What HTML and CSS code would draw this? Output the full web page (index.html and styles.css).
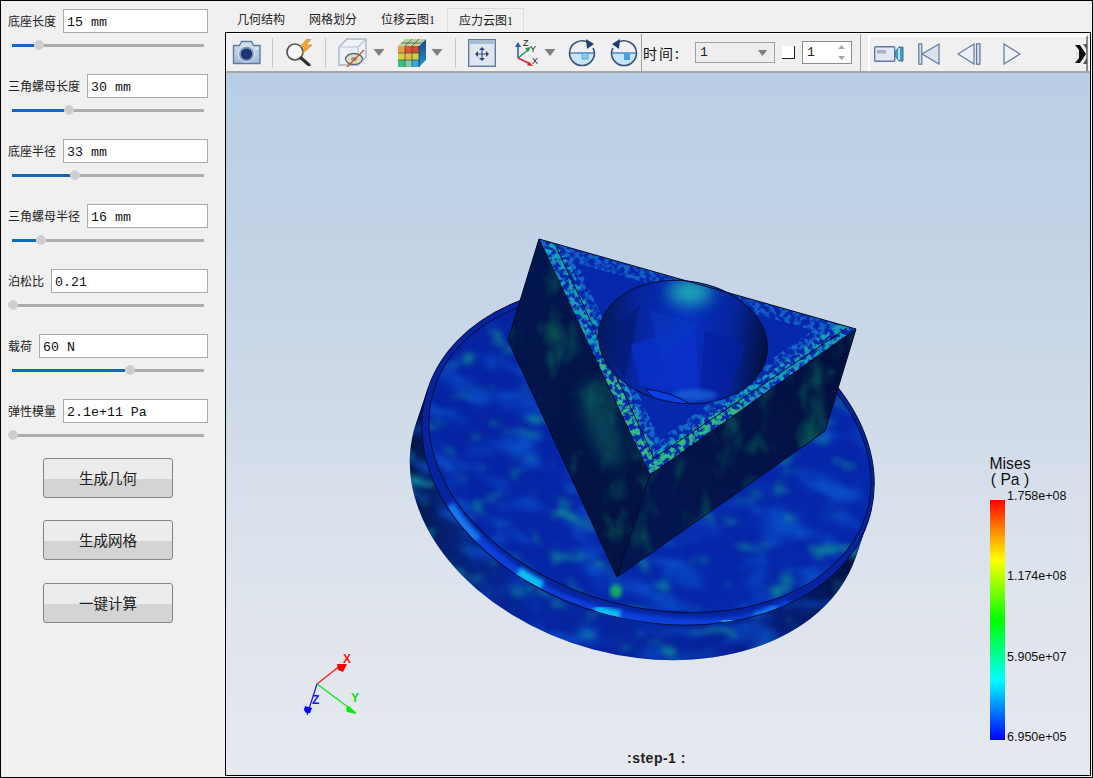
FILE: index.html
```html
<!DOCTYPE html>
<html lang="zh">
<head>
<meta charset="utf-8">
<title>应力云图</title>
<link rel="stylesheet" href="styles.css">
</head>
<body>
<div class="app">
  <aside class="side">
    <div class="group"><div class="row"><label>底座长度</label><input class="field" value="15 mm"></div><div class="slider"><div class="fill" style="width:22px"></div><div class="thumb" style="left:22px"></div></div></div>
    <div class="group"><div class="row"><label>三角螺母长度</label><input class="field" value="30 mm"></div><div class="slider"><div class="fill" style="width:52px"></div><div class="thumb" style="left:52px"></div></div></div>
    <div class="group"><div class="row"><label>底座半径</label><input class="field" value="33 mm"></div><div class="slider"><div class="fill" style="width:58px"></div><div class="thumb" style="left:58px"></div></div></div>
    <div class="group"><div class="row"><label>三角螺母半径</label><input class="field" value="16 mm"></div><div class="slider"><div class="fill" style="width:24px"></div><div class="thumb" style="left:24px"></div></div></div>
    <div class="group"><div class="row"><label>泊松比</label><input class="field" value="0.21"></div><div class="slider"><div class="thumb" style="left:-4px"></div></div></div>
    <div class="group"><div class="row"><label>载荷</label><input class="field" value="60 N"></div><div class="slider"><div class="fill" style="width:113px"></div><div class="thumb" style="left:113px"></div></div></div>
    <div class="group"><div class="row"><label>弹性模量</label><input class="field" value="2.1e+11 Pa"></div><div class="slider"><div class="thumb" style="left:-4px"></div></div></div>
    <div class="actions">
      <button class="btn">生成几何</button>
      <button class="btn">生成网格</button>
      <button class="btn">一键计算</button>
    </div>
  </aside>
  <main class="main">
    <nav class="tabs">
      <span class="tab">几何结构</span><span class="tab">网格划分</span><span class="tab">位移云图1</span><span class="tab active">应力云图1</span>
    </nav>
    <section class="frame">
      <div class="toolbar">
        <svg class="tool first" viewBox="0 0 29 26"><defs><linearGradient id="camB" x1="0" y1="0" x2="0" y2="1"><stop offset="0" stop-color="#d4e0f0"/><stop offset="1" stop-color="#a4b9d6"/></linearGradient></defs><path d="M1.500 6h6l2-4h10l2 4h6.500v18H1.500z" fill="url(#camB)" stroke="#5f7ba3" stroke-width="1.400" stroke-linejoin="round"/><circle cx="14.500" cy="14.500" r="8" fill="#7f97ba" stroke="#eef3f9"/><circle cx="14.500" cy="14.500" r="5.600" fill="#1b3672"/><rect x="23.500" y="8" width="2" height="2" fill="#f4f6ff"/></svg>
        <i class="sep a"></i>
        <svg class="tool" viewBox="0 0 29 27"><circle cx="10" cy="13" r="8" fill="#f4f6f8" stroke="#555" stroke-width="1.700"/><path d="M16 19l8 7" stroke="#333" stroke-width="3.200" stroke-linecap="round"/><path d="M22 0l-7 8h5l-3 7 10-9h-6l5-6z" fill="#f2a93a" stroke="#cb7d22" stroke-width=".7"/></svg>
        <i class="sep a"></i>
        <svg class="tool boxic" viewBox="0 0 29 29"><path d="M1 9l8-8h19v18l-8 8H1z" fill="#eef1f5" stroke="#aab6c6" stroke-width="1.400"/><path d="M1 9h19v18M20 9l8-8" fill="none" stroke="#b8c3d1" stroke-width="1.200"/><ellipse cx="16" cy="21" rx="8.500" ry="5.500" fill="#e6dcae" stroke="#566c8c" stroke-width="1.300"/><ellipse cx="16" cy="21" rx="3" ry="2" fill="#8898a8"/><path d="M9 29l17-17" stroke="#c9502c" stroke-width="1.300"/></svg>
        <svg class="drop d6" viewBox="0 0 11 7"><path d="M0 0h11L5.500 7z" fill="#808080"/></svg>
        <svg class="tool cube" viewBox="0 0 30 30"><defs><linearGradient id="cubeS" x1="0" y1="0" x2="0" y2="1"><stop offset="0" stop-color="#1f3f8c"/><stop offset="1" stop-color="#1e9ccc"/></linearGradient></defs><path d="M1 8h7v7H1z" fill="#e8a040"/><path d="M8 8h7v7H8z" fill="#e2552e"/><path d="M15 8h7v7h-7z" fill="#d84a2c"/><path d="M1 15h7v7H1z" fill="#d8cc40"/><path d="M8 15h7v7H8z" fill="#e8b83c"/><path d="M15 15h7v7h-7z" fill="#c8d444"/><path d="M1 22h7v7H1z" fill="#3cc07c"/><path d="M8 22h7v7H8z" fill="#7cd0a0"/><path d="M15 22h7v7h-7z" fill="#3ca8dc"/><path d="M22 8l7-7v21l-7 7z" fill="url(#cubeS)"/><path d="M1 8l7-7h21l-7 7z" fill="#b6d49a"/><path d="M8 8v21M15 8v21M1 15h21M1 22h21M8 8l7-7M15 8l7-7M4 5h22" stroke="#2a3656" stroke-width=".6" fill="none"/><path d="M22 8v21" stroke="#1e2f5c" stroke-width=".8"/></svg>
        <svg class="drop d4" viewBox="0 0 11 7"><path d="M0 0h11L5.500 7z" fill="#808080"/></svg>
        <i class="sep b"></i>
        <svg class="tool wide" viewBox="0 0 28 28"><rect x=".7" y=".7" width="26.600" height="26.600" fill="#dfe6ef" stroke="#5f7aa3" stroke-width="1.400"/><rect x="1" y="1" width="26" height="4" fill="#a9bad3"/><path d="M14 10v10M9 15h10" stroke="#2e4670" stroke-width="1.100"/><path d="M14 8l-3 3h6zM14 22l-3-3h6zM7 15l3-3v6zM21 15l-3-3v6z" fill="#2e4670"/></svg>
        <svg class="tool axes" viewBox="0 0 28 28"><path d="M6 19V6" stroke="#2a55b0" stroke-width="1.500"/><path d="M6 3l-3 5h6z" fill="#2a55b0"/><path d="M6 19l10-8" stroke="#1e9a4a" stroke-width="1.500"/><path d="M19 8l-6 1 3 4z" fill="#1e9a4a"/><path d="M6 19l12 6" stroke="#e02030" stroke-width="1.500"/><path d="M21 27l-6-.5 2-4z" fill="#e02030"/><text x="11" y="7" class="axl">Z</text><text x="18" y="13" class="axl">Y</text><text x="20" y="25" class="axl">X</text></svg>
        <svg class="drop d4" viewBox="0 0 11 7"><path d="M0 0h11L5.500 7z" fill="#808080"/></svg>
        <svg class="tool wide d12" viewBox="0 0 28 28"><path d="M1.500 14H26.500A12.500 12.500 0 0 1 1.500 14z" fill="#c6e6f8"/><path d="M1.500 14h25" stroke="#2a6fb0" stroke-width="1.200"/><path d="M14 14h6v6h-6z" fill="#8cc8ec" stroke="#3d88c4" stroke-width=".6"/><path d="M21 4A12.500 12.500 0 0 0 1.500 14 12.500 12.500 0 0 0 26.500 14 12 12 0 0 0 25 9" fill="none" stroke="#3b5378" stroke-width="1.600"/><path d="M18 0l8 5-7 5z" fill="#1f3f70"/></svg>
        <svg class="tool wide d14" viewBox="0 0 28 28"><path d="M1.500 14H26.500A12.500 12.500 0 0 1 1.500 14z" fill="#c6e6f8"/><path d="M1.500 14h25" stroke="#2a6fb0" stroke-width="1.200"/><path d="M14 14v7h6v-7z" fill="#4aa0dc"/><path d="M7 4A12.500 12.500 0 0 1 26.500 14 12.500 12.500 0 0 1 1.500 14 12 12 0 0 1 3 9" fill="none" stroke="#3b5378" stroke-width="1.600"/><path d="M10 0L2 5l7 5z" fill="#1f3f70"/></svg>
        <i class="sep c"></i>
        <span class="time">时间:</span>
        <div class="combo"><span>1</span><svg class="carets" viewBox="0 0 11 7"><path d="M0 0h11L5.500 7z" fill="#808080"/></svg></div>
        <i class="square"></i>
        <div class="spin"><span>1</span><svg class="spinarrows" viewBox="0 0 7 15"><path d="M3.500 0L7 4H0zM3.500 15L7 11H0z" fill="#a8a8a8"/></svg></div>
        <i class="sep d"></i>
        <div class="player">
          <svg class="pl video" viewBox="0 0 30 16"><rect x=".7" y=".7" width="20" height="14.600" rx="1" fill="#e4e9f1" stroke="#5f7aa3" stroke-width="1.400"/><rect x="3" y="4" width="9" height="3.500" fill="#a8b2c2"/><path d="M21 6l4-5h4v14h-4l-4-5z" fill="#3aa0d0" stroke="#4a6a96"/><path d="M25 2v12" stroke="#e8f0f8" stroke-width="1.500"/></svg>
          <svg class="pl firstf" viewBox="0 0 22 22"><rect x=".8" y=".8" width="3" height="20.400" fill="#d5dce6" stroke="#6079a0" stroke-width="1.200"/><path d="M21 1L4 11l17 10z" fill="#dce2ea" stroke="#6079a0" stroke-width="1.200"/></svg>
          <svg class="pl prev" viewBox="0 0 24 22"><path d="M17 1L1 11l16 10z" fill="#eef1f5" stroke="#6079a0" stroke-width="1.200"/><rect x="19.500" y=".8" width="3.500" height="20.400" fill="#d5dce6" stroke="#6079a0" stroke-width="1.200"/></svg>
          <svg class="pl play" viewBox="0 0 18 22"><path d="M1 1l16 10L1 21z" fill="#eef1f5" stroke="#6079a0" stroke-width="1.200"/></svg>
          <svg class="pl more" viewBox="0 0 12 20"><path d="M0 1h5l6 9-6 9H0l4-5V6z" fill="#111"/><path d="M1 7l3 3-3 3z" fill="#ddd"/><path d="M8 0h4v6zM8 20h4v-6z" fill="#555"/></svg>
        </div>
      </div>
      <div class="viewport">
        <svg class="scene" viewBox="226 73 864 702">
          <defs>
            <filter id="mottleDisc" x="-5%" y="-5%" width="110%" height="110%" color-interpolation-filters="sRGB">
              <feTurbulence type="fractalNoise" baseFrequency="0.022 0.04" numOctaves="4" seed="11" result="t1"/>
              <feColorMatrix in="t1" values="0 0 0 0 0.04  0 0 0 0 0.30  0 0 0 0 0.78  3.400 0 0 0 -1.700" result="a"/>
              <feTurbulence type="fractalNoise" baseFrequency="0.035 0.055" numOctaves="3" seed="27" result="t2"/>
              <feColorMatrix in="t2" values="0 0 0 0 0.05  0 0 0 0 0.50  0 0 0 0 0.60  4.500 0 0 0 -2.700" result="b"/>
              <feMerge result="m"><feMergeNode in="a"/><feMergeNode in="b"/></feMerge>
              <feGaussianBlur in="m" stdDeviation="2.400" result="mb"/>
              <feComposite in="mb" in2="SourceAlpha" operator="in" result="n"/>
              <feMerge><feMergeNode in="SourceGraphic"/><feMergeNode in="n"/></feMerge>
            </filter>
            <filter id="mottleFace" x="-5%" y="-5%" width="110%" height="110%" color-interpolation-filters="sRGB">
              <feTurbulence type="fractalNoise" baseFrequency="0.035 0.022" numOctaves="4" seed="4"/>
              <feColorMatrix values="0 0 0 0 0.03  0 0 0 0 0.30  0 0 0 0 0.33  3.200 0 0 0 -1.700"/>
              <feGaussianBlur stdDeviation="1.200"/>
              <feComposite in2="SourceAlpha" operator="in" result="n"/>
              <feMerge><feMergeNode in="SourceGraphic"/><feMergeNode in="n"/></feMerge>
            </filter>
            <filter id="grain" x="-5%" y="-5%" width="110%" height="110%" color-interpolation-filters="sRGB">
              <feTurbulence type="fractalNoise" baseFrequency="0.2" numOctaves="2" seed="8"/>
              <feColorMatrix values="0 0 0 0 0  0 0 0 0 0  0 0 0 0 0  5 0 0 0 -2.100"/>
              <feGaussianBlur stdDeviation=".5" result="m"/>
              <feComposite in="SourceGraphic" in2="m" operator="in"/>
            </filter>
            <filter id="soft"><feGaussianBlur stdDeviation="2.200"/></filter>
            <filter id="softband" x="-20%" y="-40%" width="140%" height="180%"><feGaussianBlur stdDeviation="2"/></filter>
            <filter id="soft6" x="-60%" y="-60%" width="220%" height="220%"><feGaussianBlur stdDeviation="8"/></filter>
            <linearGradient id="sideG" gradientUnits="userSpaceOnUse" x1="405" y1="0" x2="870" y2="0">
              <stop offset="0" stop-color="#031444"/><stop offset=".13" stop-color="#06206e"/><stop offset=".35" stop-color="#0626a0"/><stop offset=".78" stop-color="#06229a"/><stop offset=".93" stop-color="#041a66"/><stop offset="1" stop-color="#02103c"/>
            </linearGradient>
            <linearGradient id="topG" gradientUnits="userSpaceOnUse" x1="430" y1="300" x2="800" y2="620">
              <stop offset="0" stop-color="#0622a0"/><stop offset="1" stop-color="#0628ac"/>
            </linearGradient>
            <linearGradient id="leftFace" gradientUnits="userSpaceOnUse" x1="510" y1="300" x2="650" y2="470">
              <stop offset="0" stop-color="#02164e"/><stop offset=".5" stop-color="#021448"/><stop offset="1" stop-color="#021242"/>
            </linearGradient>
            <linearGradient id="rightFace" gradientUnits="userSpaceOnUse" x1="640" y1="550" x2="840" y2="360">
              <stop offset="0" stop-color="#031650"/><stop offset="1" stop-color="#021040"/>
            </linearGradient>
            <linearGradient id="holeG" gradientUnits="userSpaceOnUse" x1="598" y1="0" x2="768" y2="0">
              <stop offset="0" stop-color="#031a58"/><stop offset=".2" stop-color="#06249c"/><stop offset=".5" stop-color="#0830c4"/><stop offset=".78" stop-color="#06249a"/><stop offset=".93" stop-color="#03175a"/><stop offset="1" stop-color="#020e3c"/>
            </linearGradient>
            <clipPath id="triClip"><path d="M539 239L856 329L650 475Z"/></clipPath>
            <clipPath id="holeClip"><ellipse cx="683" cy="342" rx="85" ry="61" transform="rotate(8 683 342)"/></clipPath>
            <clipPath id="discClip"><ellipse cx="648" cy="455" rx="230" ry="165" transform="rotate(15 648 455)"/></clipPath>
          </defs>

          <g filter="url(#mottleDisc)">
            <ellipse cx="636" cy="490" rx="230" ry="165" transform="rotate(15 636 490)" fill="url(#sideG)"/>
            <ellipse cx="639" cy="481" rx="230" ry="165" transform="rotate(15 639 481)" fill="url(#sideG)"/>
            <ellipse cx="642" cy="472" rx="230" ry="165" transform="rotate(15 642 472)" fill="url(#sideG)"/>
            <ellipse cx="645" cy="463" rx="230" ry="165" transform="rotate(15 645 463)" fill="url(#sideG)"/>
          </g>
          <ellipse cx="648" cy="455" rx="230" ry="165" transform="rotate(15 648 455)" fill="#0624a0"/>
          <g clip-path="url(#discClip)">
            <path d="M449 506C457 518 465 530 477 540C500 562 525 580 547 592C587 612 640 623 700 624C730 625 760 620 790 604" class="band deep" filter="url(#softband)"/>
            <path d="M449 506C457 518 465 530 477 540" class="band cyan" filter="url(#softband)"/>
            <path d="M518 572C526 577 533 582 542 586" class="band hot" filter="url(#softband)"/>
            <path d="M594 610C602 613 610 614 620 616" class="band hot" filter="url(#softband)"/>
            <path d="M722 623C728 623 734 622 740 621" class="band hot" filter="url(#softband)"/>
            <path d="M755 618C765 615 770 613 778 609" class="band cyan" filter="url(#softband)"/>
          </g>
          <ellipse class="line" cx="648" cy="455" rx="230" ry="165" transform="rotate(15 648 455)"/>
          <ellipse cx="650" cy="452" rx="225" ry="155" transform="rotate(15 650 452)" fill="url(#topG)" filter="url(#mottleDisc)"/>
          <ellipse class="line" cx="650" cy="452" rx="225" ry="155" transform="rotate(15 650 452)"/>
          <ellipse cx="616" cy="591" rx="6" ry="7" fill="#14a868" filter="url(#soft)"/>

          <path class="face" d="M539 239L650 475L617 577L508 340Z" fill="url(#leftFace)" filter="url(#mottleFace)"/>
          <path class="face" d="M650 475L856 329L825 431L617 577Z" fill="url(#rightFace)" filter="url(#mottleFace)"/>
          <ellipse cx="602" cy="425" rx="14" ry="46" fill="#0f6a68" opacity=".55" filter="url(#soft6)" transform="rotate(-20 602 425)"/>

          <g clip-path="url(#triClip)">
            <path d="M539 239L856 329L650 475Z" fill="#0628ac"/>
            <path d="M539 239L856 329" fill="none" stroke="#1260c4" stroke-width="26" filter="url(#grain)"/>
            <path d="M539 239L650 475L856 329" fill="none" stroke="#1268c8" stroke-width="48" filter="url(#grain)"/>
            <path d="M545 243L652 470L852 330" fill="none" stroke="#12a0b4" stroke-width="26" filter="url(#grain)"/>
            <path d="M600 350L652 466L745 402" fill="none" stroke="#3cc864" stroke-width="12" opacity=".7" filter="url(#grain)"/>
          </g>
          <path d="M555 244L654 458L847 328" class="line"/>

          <ellipse cx="683" cy="342" rx="85" ry="61" transform="rotate(8 683 342)" fill="url(#holeG)"/>
          <g clip-path="url(#holeClip)">
            <path d="M630 345L695 325L700 395L640 385Z" fill="#0a30cc" opacity=".7"/>
            <path d="M705 330L745 345L725 404L700 395Z" fill="#0520a0" opacity=".7"/>
            <path d="M600 335L640 305L625 380Z" fill="#041a70" opacity=".6"/>
            <path d="M650 310L700 325L660 360Z" fill="#0a3ac0" opacity=".5"/>
            <ellipse cx="690" cy="292" rx="22" ry="13" fill="#20c0b0" opacity=".85" filter="url(#soft6)"/>
            <ellipse cx="695" cy="395" rx="22" ry="6" fill="#1a68d8" opacity=".7" filter="url(#soft)"/>
            <path d="M645 389Q672 392 690 404L660 404Z" fill="#0a40e4" stroke="#000" stroke-width=".7"/>
          </g>
          <ellipse class="line" cx="683" cy="342" rx="85" ry="61" transform="rotate(8 683 342)"/>
          <path class="line strong" d="M539 239L856 329L650 475ZM539 239L508 340L617 577L825 431L856 329M650 475L617 577"/>

          <g class="triad">
            <path d="M317 684L341 665" stroke="#ff1010"/>
            <path d="M337 664L347 664L343 672L338 670Z" fill="#ff0000"/>
            <path d="M317 684L356 713" stroke="#10e010"/>
            <path d="M349 706L356 714L347 712L346 708Z" fill="#00ee00"/>
            <path d="M317 684L307 715" stroke="#1010ff"/>
            <path d="M305 706L312 708L310 713L306 713L304 710Z" fill="#0000ff"/>
            <text x="343" y="663" class="tx cx">X</text>
            <text x="351" y="702" class="tx cy">Y</text>
            <text x="312" y="704" class="tx cz">Z</text>
          </g>
        </svg>
        <div class="legend">
          <div class="legend-title">Mises<br>( Pa )</div>
          <div class="legend-body">
            <div class="colorbar"></div>
            <ul class="ticks"><li>1.758e+08</li><li>1.174e+08</li><li>5.905e+07</li><li>6.950e+05</li></ul>
          </div>
        </div>
        <div class="step">:step-1 :</div>
      </div>
    </section>
  </main>
</div>
</body>
</html>
```
FILE: styles.css
```css
* { box-sizing: border-box; }
html, body { margin: 0; padding: 0; }
body { width: 1093px; height: 778px; overflow: hidden; background: #f0f0f0; font-family: "Noto Sans CJK SC", "Liberation Sans", sans-serif; color: #1c1c1c; }
.app { display: flex; width: 1093px; height: 778px; border: 1px solid #000; background: #f0f0f0; }

/* left panel */
.side { width: 224px; flex: none; display: flex; flex-direction: column; gap: 27px; padding: 8px 17px 0 7px; }
.group { display: flex; flex-direction: column; }
.row { display: flex; align-items: center; gap: 7px; height: 24px; }
.row label { font-size: 12px; line-height: 16px; white-space: nowrap; color: #222; }
.field { flex: 1; min-width: 0; height: 24px; border: 1px solid #a9a9a9; background: #fff; padding: 2px 3px 0; font-family: "Liberation Mono", monospace; font-size: 13.300px; color: #111; outline: none; }
.slider { position: relative; height: 3px; margin: 11px 4px 0; background: #adadad; }
.fill { height: 3px; background: #0f68b8; }
.thumb { position: absolute; top: -4px; width: 10px; height: 10px; border-radius: 50%; background: #cdcdcd; border: 1px solid #d2d2d2; }
.actions { display: flex; flex-direction: column; gap: 22px; margin: -6px 0 0 35px; }
.btn { width: 130px; height: 40px; padding: 0 0 2px; border: 1px solid #858585; border-radius: 3px; background: linear-gradient(#ececec 0, #ececec 20px, #d4d4d4 20px, #d4d4d4 100%); font-family: inherit; font-size: 14.500px; color: #222; }
.btn:last-child { margin-top: 1px; }

/* main */
.main { width: 867px; flex: none; display: flex; flex-direction: column; }
.tabs { height: 31px; display: flex; align-items: flex-end; font-family: "Liberation Serif", "Noto Sans CJK SC", serif; font-size: 12px; }
.tab { height: 24px; line-height: 25px; padding: 0 12px; white-space: nowrap; color: #222; }
.tab.active { width: 77px; border: 1px solid #dcdcdc; border-bottom: none; line-height: 24px; padding: 0 11px; }
.frame { width: 866px; height: 744px; border: 1px solid #000; display: flex; flex-direction: column; }

/* toolbar */
.toolbar { height: 40px; flex: none; display: flex; align-items: center; border-bottom: 2px solid #a6a6a6; border-top: 1px solid #fff; padding-left: 6px; }
.tool { width: 29px; height: 27px; flex: none; }
.tool.boxic { height: 29px; }
.tool.wide, .tool.axes { width: 28px; height: 28px; }
.tool.cube { width: 30px; height: 30px; margin-left: 12px; }
.tool.axes { margin-left: 16px; }
.tool.wide { margin-left: 12px; }
.tool.d12 { margin-left: 12px; }
.tool.d14 { margin-left: 14px; }
.drop { width: 12px; height: 7px; flex: none; }
.d6 { margin-left: 6px; }
.d4 { margin-left: 4px; }
.sep { display: block; width: 1px; height: 30px; flex: none; background: #c8c8c8; }
.sep.a { margin: 0 12px 0 11px; }
.sep.b { margin-left: 12px; }
.sep.c { height: 37px; margin-left: 3px; background: #a0a0a0; }
.sep.d { height: 37px; margin-left: 8px; background: #a0a0a0; }
.time { margin-left: 1px; width: 52px; font-size: 14px; letter-spacing: 2px; white-space: nowrap; color: #111; }
.combo { width: 80px; height: 21px; flex: none; display: flex; align-items: center; justify-content: space-between; padding: 0 6px 0 4px; border: 1px solid #a0a0a0; background: #eeeeee; font-family: "Liberation Mono", monospace; font-size: 13px; }
.carets { width: 11px; height: 6px; }
.square { width: 13px; height: 13px; margin-left: 7px; background: #fff; border-right: 1px solid #222; border-bottom: 1px solid #222; flex: none; }
.spin { width: 50px; height: 23px; margin-left: 7px; flex: none; display: flex; align-items: center; justify-content: space-between; padding: 0 6px 0 4px; border: 1px solid #8c8c8c; background: #fff; font-family: "Liberation Mono", monospace; font-size: 13px; }
.spinarrows { width: 7px; height: 15px; }
.player { width: 220px; height: 36px; margin-left: 7px; flex: none; display: flex; align-items: center; padding-left: 4px; border-top: 2px solid #fff; border-left: 2px solid #fff; border-right: 2px solid #8a8a8a; }
.pl { flex: none; }
.video { width: 30px; height: 16px; }
.firstf { width: 22px; height: 22px; margin-left: 14px; }
.prev { width: 24px; height: 22px; margin-left: 17px; }
.play { width: 18px; height: 22px; margin-left: 22px; }
.more { width: 12px; height: 20px; margin-left: 54px; }
.axl { font: 9px "Liberation Sans", sans-serif; fill: #222; }

/* viewport */
.viewport { position: relative; flex: 1; background: linear-gradient(#b9cee5 0, #c5d4e6 30%, #dde3ec 70%, #e6e9ef 100%); overflow: hidden; }
.scene { display: block; width: 864px; height: 702px; }
.line { fill: none; stroke: #04103a; stroke-width: 1; }
.line.strong { stroke: #020a28; }
.band { fill: none; stroke-width: 11; }
.band.deep { stroke: #0840dc; }
.band.cyan { stroke: #1478ec; }
.band.hot { stroke: #10c0f4; }
.triad path[stroke] { fill: none; stroke-width: 1.200; }
.tx { font: bold 12px "Liberation Sans", sans-serif; }
.cx { fill: #ff1515; }
.cy { fill: #10e010; }
.cz { fill: #1515ff; }
.legend { position: absolute; left: 763px; top: 383px; width: 90px; font-family: "Liberation Sans", sans-serif; color: #111; }
.legend-title { font-size: 15.700px; line-height: 16px; width: 42px; text-align: center; white-space: nowrap; }
.legend-body { display: flex; margin-top: 12px; margin-left: 1px; }
.colorbar { width: 15px; height: 240px; background: linear-gradient(#ff0000 0, #ff8c00 13%, #ffff00 25%, #00ff00 50%, #00ffff 75%, #0000ff 100%); }
.ticks { list-style: none; margin: -11px 0 0 2px; padding: 0; height: 255px; display: flex; flex-direction: column; justify-content: space-between; font-size: 12.500px; line-height: 14px; white-space: nowrap; }
.step { position: absolute; left: 401px; top: 677px; font: bold 14px "Liberation Sans", sans-serif; letter-spacing: .5px; color: #222; white-space: nowrap; }
```
